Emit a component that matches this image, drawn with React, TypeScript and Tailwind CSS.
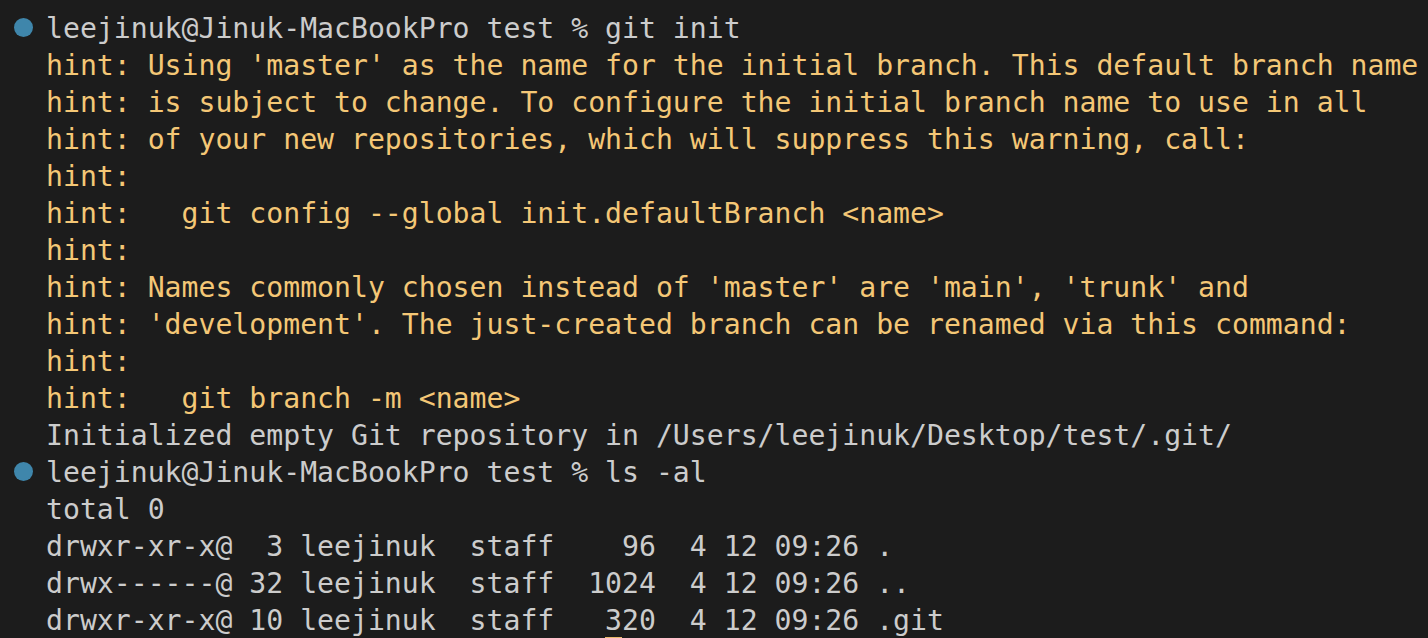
const lines: { text: string; kind: "prompt" | "hint" | "out" }[] = [
  { text: "leejinuk@Jinuk-MacBookPro test % git init", kind: "prompt" },
  { text: "hint: Using 'master' as the name for the initial branch. This default branch name", kind: "hint" },
  { text: "hint: is subject to change. To configure the initial branch name to use in all", kind: "hint" },
  { text: "hint: of your new repositories, which will suppress this warning, call:", kind: "hint" },
  { text: "hint:", kind: "hint" },
  { text: "hint:   git config --global init.defaultBranch <name>", kind: "hint" },
  { text: "hint:", kind: "hint" },
  { text: "hint: Names commonly chosen instead of 'master' are 'main', 'trunk' and", kind: "hint" },
  { text: "hint: 'development'. The just-created branch can be renamed via this command:", kind: "hint" },
  { text: "hint:", kind: "hint" },
  { text: "hint:   git branch -m <name>", kind: "hint" },
  { text: "Initialized empty Git repository in /Users/leejinuk/Desktop/test/.git/", kind: "out" },
  { text: "leejinuk@Jinuk-MacBookPro test % ls -al", kind: "prompt" },
  { text: "total 0", kind: "out" },
  { text: "drwxr-xr-x@  3 leejinuk  staff    96  4 12 09:26 .", kind: "out" },
  { text: "drwx------@ 32 leejinuk  staff  1024  4 12 09:26 ..", kind: "out" },
  { text: "drwxr-xr-x@ 10 leejinuk  staff   320  4 12 09:26 .git", kind: "out" },
];

export default function App() {
  return (
    <div className="w-[1428px] h-[638px] overflow-hidden bg-[#1c1c1c] pt-[9.5px] font-['DejaVu_Sans_Mono',monospace] text-[28.15px] leading-[37px]">
      {lines.map((line, i) => (
        <div key={i} className="flex items-center h-[37px]">
          <div className="w-[46px] flex justify-center pl-[1px] pb-[2px]">
            {line.kind === "prompt" && (
              <span className="block w-[19px] h-[19px] rounded-full bg-[#3f86ab]" />
            )}
          </div>
          <div
            className={
              "relative whitespace-pre " +
              (line.kind === "hint" ? "text-[#f4c776]" : "text-[#cccccc]")
            }
          >
            {line.text}
            {i === lines.length - 1 && (
              <span className="absolute left-[559px] bottom-0 w-[17px] h-[2px] bg-[#e9b96c]" />
            )}
          </div>
        </div>
      ))}
    </div>
  );
}
